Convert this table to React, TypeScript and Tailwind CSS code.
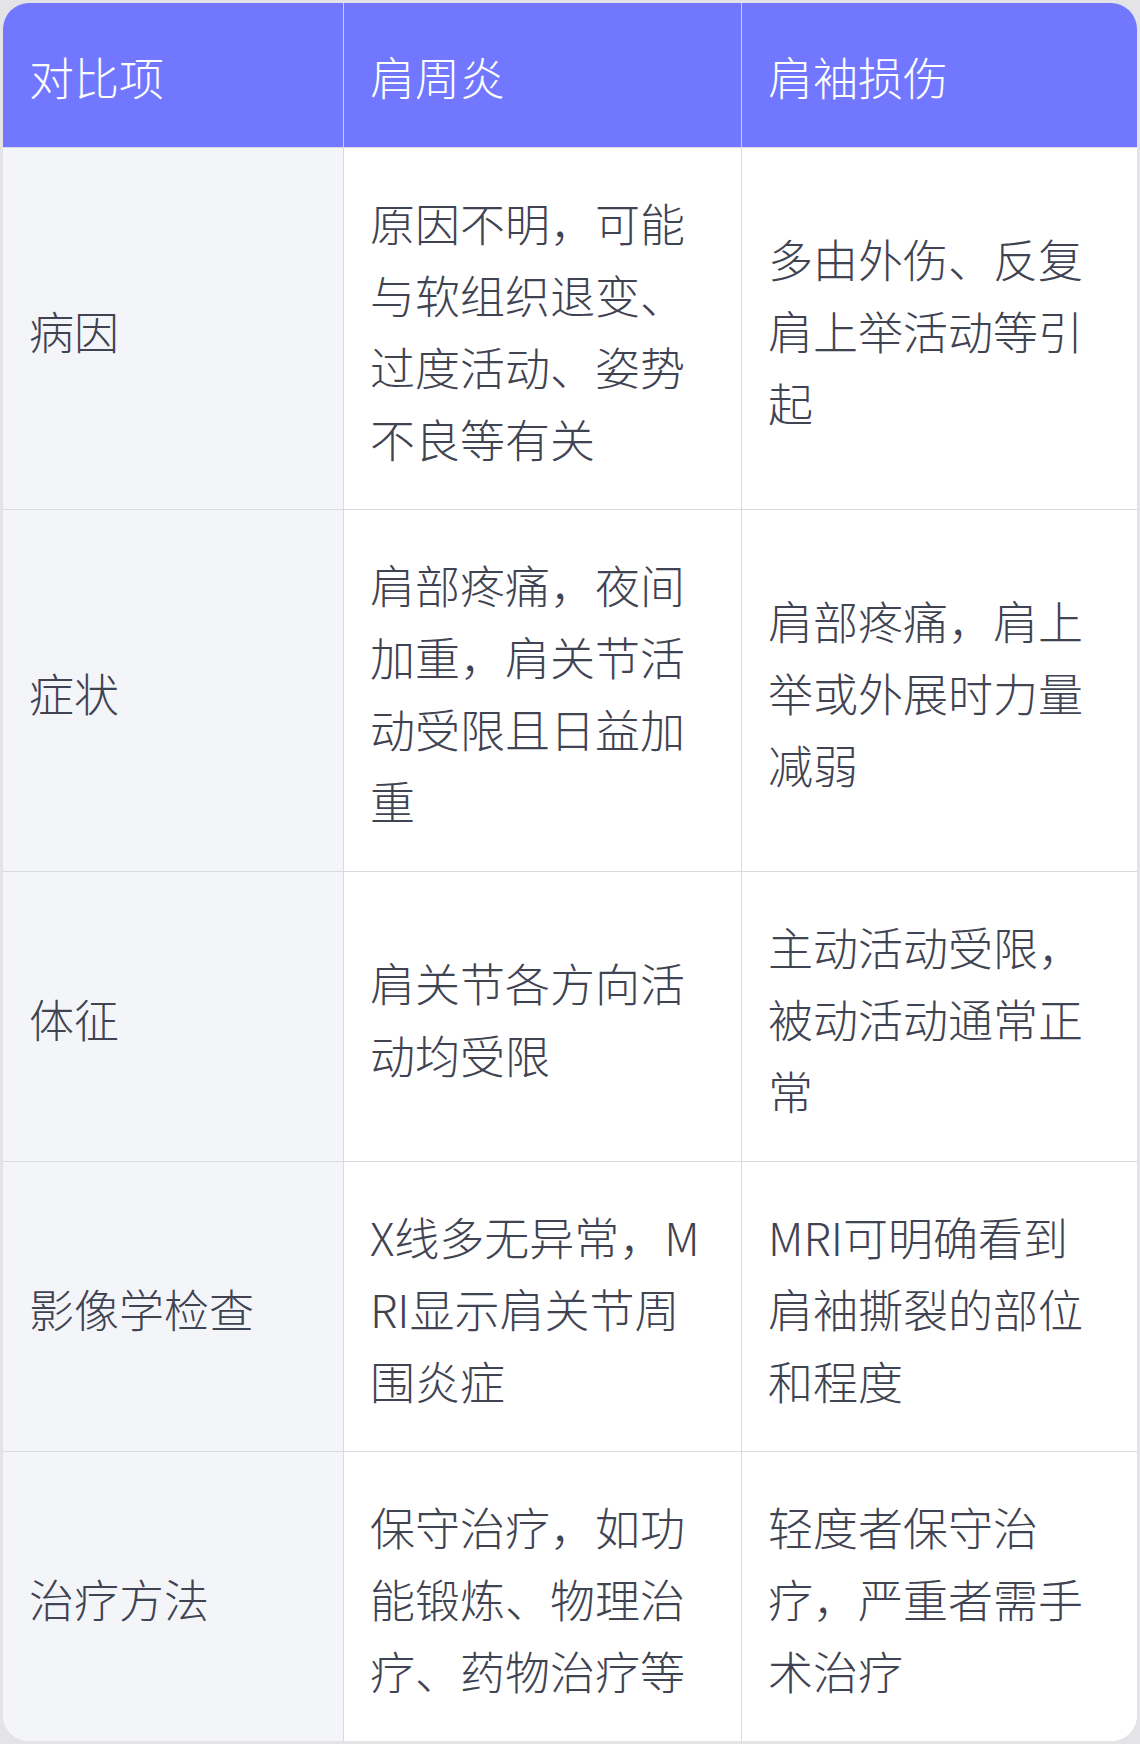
const header = ["对比项", "肩周炎", "肩袖损伤"];

const rows: string[][] = [
  ["病因", "原因不明，可能与软组织退变、过度活动、姿势不良等有关", "多由外伤、反复肩上举活动等引起"],
  ["症状", "肩部疼痛，夜间加重，肩关节活动受限且日益加重", "肩部疼痛，肩上举或外展时力量减弱"],
  ["体征", "肩关节各方向活动均受限", "主动活动受限，被动活动通常正常"],
  ["影像学检查", "X线多无异常，MRI显示肩关节周围炎症", "MRI可明确看到肩袖撕裂的部位和程度"],
  ["治疗方法", "保守治疗，如功能锻炼、物理治疗、药物治疗等", "轻度者保守治疗，严重者需手术治疗"],
];

const font = { fontFamily: '"Noto Sans CJK SC", "Noto Sans", sans-serif' };

export default function App() {
  return (
    <div className="w-[1140px] h-[1744px] bg-[#e4e4e8] p-[3px]" style={font}>
      <div className="h-full rounded-[26px] overflow-hidden bg-white grid grid-cols-[341px_398px_395px] content-start">
        {header.map((h, i) => (
          <div
            key={h}
            className={
              "bg-[#7177ff] text-white pl-[26px] pr-[28px] pt-[38px] pb-[34px] text-[45px] leading-[72px] font-light flex items-center " +
              (i < 2 ? "border-r border-[#c9cbef]" : "")
            }
          >
            {h}
          </div>
        ))}
        {rows.map((r) =>
          r.map((c, i) => (
            <div
              key={r[0] + i}
              className={
                "border-t border-[#dadbe1] pl-[26px] pr-[28px] pt-[38.5px] pb-[34.5px] text-[45px] leading-[72px] font-light text-[#3f4352] flex items-center break-all " +
                (i === 0 ? "bg-[#f4f5f9] " : "bg-white ") +
                (i < 2 ? "border-r" : "")
              }
            >
              <span>{c}</span>
            </div>
          ))
        )}
      </div>
    </div>
  );
}
